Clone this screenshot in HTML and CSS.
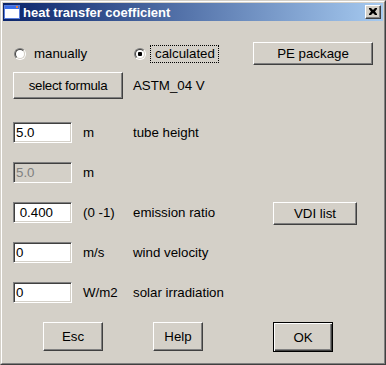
FILE: index.html
```html
<!DOCTYPE html>
<html>
<head>
<meta charset="utf-8">
<link rel="stylesheet" href="styles.css">
</head>
<body>
<div class="window">
  <div class="frame">
    <div class="titlebar">
      <svg class="appicon" width="16" height="14" viewBox="0 0 16 14">
        <rect x="0.5" y="0.5" width="15" height="13" fill="#ffffff" stroke="#5a7edc"/>
        <rect x="1" y="1" width="14" height="3" fill="#3a6ee8"/>
        <rect x="12" y="1" width="2" height="2" fill="#f08030"/>
      </svg>
      <span class="title">heat transfer coefficient</span>
      <div class="closebtn">
        <svg width="8" height="7" viewBox="0 0 8 7"><path d="M0 0h2l2 2 2-2h2v1l-2 2.5 2 2.5v1h-2l-2-2-2 2h-2v-1l2-2.5-2-2.5z" fill="#000"/></svg>
      </div>
    </div>
    <div class="content">
      <div class="row r1">
        <div class="opt opt1"><span class="radio"></span><span class="lbl">manually</span></div>
        <div class="opt opt2"><span class="radio checked"></span><span class="lbl focus">calculated</span></div>
        <div class="btn pe">PE package</div>
      </div>
      <div class="row r2">
        <div class="btn formula">select formula</div>
        <span class="formula-name">ASTM_04 V</span>
      </div>
      <div class="row field">
        <input class="edit" value="5.0">
        <span class="unit">m</span>
        <span class="desc">tube height</span>
      </div>
      <div class="row field">
        <input class="edit" value="5.0" disabled>
        <span class="unit">m</span>
      </div>
      <div class="row field">
        <input class="edit" value=" 0.400">
        <span class="unit">(0 -1)</span>
        <span class="desc">emission ratio</span>
        <div class="btn vdi">VDI list</div>
      </div>
      <div class="row field">
        <input class="edit" value="0">
        <span class="unit">m/s</span>
        <span class="desc">wind velocity</span>
      </div>
      <div class="row field">
        <input class="edit" value="0">
        <span class="unit">W/m2</span>
        <span class="desc">solar irradiation</span>
      </div>
      <div class="row bottom">
        <div class="btn esc">Esc</div>
        <div class="btn help">Help</div>
        <div class="btn ok">OK</div>
      </div>
    </div>
  </div>
</div>
</body>
</html>
```
FILE: styles.css
```css
* { box-sizing: border-box; }
html, body { margin: 0; padding: 0; background: #D4D0C8; }
body {
  width: 386px; height: 365px; overflow: hidden;
  font-family: "Liberation Sans", Arial, sans-serif;
  font-size: 13.3px; color: #000;
}
.window {
  width: 386px; height: 365px;
  border: 1px solid; border-color: #D4D0C8 #404040 #404040 #D4D0C8;
  background: #D4D0C8;
}
.frame {
  height: 100%;
  border: 1px solid; border-color: #ffffff #808080 #808080 #ffffff;
  padding: 1px;
}
.titlebar {
  height: 18px;
  background: linear-gradient(to right, #0A246A, #A6CAF0);
  display: flex; align-items: center;
  padding-left: 1px;
}
.appicon { display: block; flex: none; }
.title {
  color: #fff; font-weight: bold; font-size: 13px;
  margin-left: 3px; white-space: nowrap;
}
.closebtn {
  margin-left: auto; margin-right: 2px;
  width: 16px; height: 14px;
  background: #D4D0C8;
  border: 1px solid; border-color: #ffffff #404040 #404040 #ffffff;
  box-shadow: inset -1px -1px #808080;
  display: flex; align-items: center; justify-content: center;
  padding-bottom: 1px;
}
.closebtn svg { display: block; }
.content { padding-left: 10px; }
.row { display: flex; align-items: center; white-space: nowrap; }
.r1 { margin-top: 21px; height: 23px; }
.opt { display: flex; align-items: center; }
.opt1 { width: 121px; padding-left: 1px; }
.opt2 { width: 119px; }
.opt1 .lbl { margin-left: 8px; }
.opt2 .lbl { margin-left: 4px; }
.radio {
  position: relative;
  width: 12px; height: 12px; border-radius: 50%;
  border: 1px solid; border-color: #808080 #ffffff #ffffff #808080;
  flex: none;
}
.radio::before {
  content: ""; position: absolute; inset: 0;
  border-radius: 50%; background: #fff;
  border: 1px solid; border-color: #404040 #D4D0C8 #D4D0C8 #404040;
}
.radio.checked::after {
  content: ""; position: absolute; left: 3px; top: 3px;
  width: 4px; height: 4px; border-radius: 1px; background: #000;
}
.focus {
  border: 1px dotted #000;
  padding: 1px 3px 1px 4px;
  line-height: 14px;
}
.btn {
  background: #D4D0C8;
  border: 1px solid; border-color: #ffffff #404040 #404040 #ffffff;
  box-shadow: inset -1px -1px #808080;
  display: flex; align-items: center; justify-content: center;
  flex: none;
}
.pe { width: 120px; height: 23px; }
.r2 { margin-top: 7px; height: 27px; }
.formula { width: 110px; height: 27px; letter-spacing: -0.3px; }
.formula-name { margin-left: 10px; }
.field { height: 21px; margin-top: 19px; }
.r2 + .field { margin-top: 23px; }
.edit {
  width: 59px; height: 21px; flex: none;
  font: inherit; color: #000;
  background: #fff;
  border: 1px solid; border-color: #808080 #ffffff #ffffff #808080;
  box-shadow: inset 1px 1px #404040, inset -1px -1px #D4D0C8;
  padding: 0 0 0 2px; margin: 0;
  outline: none;
  white-space: pre;
}
.edit:disabled { background: #D4D0C8; color: #808080; }
.unit { width: 50px; margin-left: 11px; }
.desc { width: 140px; }
.vdi { width: 84px; height: 23px; align-self: flex-start; }
.bottom { margin-top: 19px; height: 29px; align-items: flex-start; }
.esc { width: 60px; height: 29px; margin-left: 30px; }
.help { width: 50px; height: 29px; margin-left: 50px; }
.ok {
  width: 60px; height: 30px; margin-left: 70px;
  border: 1px solid #000;
  box-shadow: inset 1px 1px #ffffff, inset -1px -1px #404040, inset -2px -2px #808080;
}
```
